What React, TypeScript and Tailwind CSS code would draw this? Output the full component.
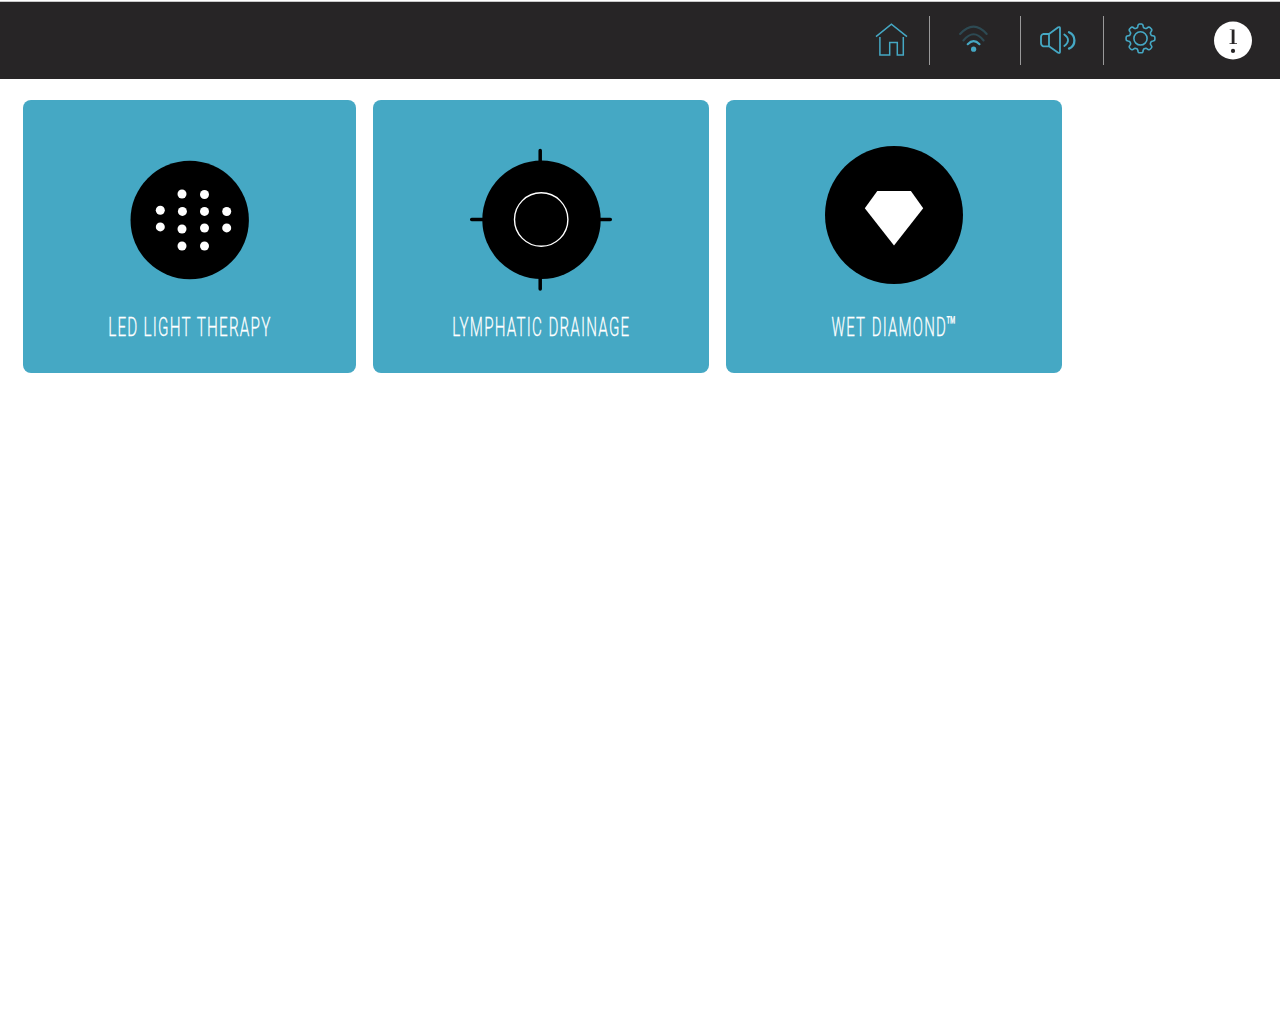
import type { ReactNode } from 'react';

const gearPath = (() => {
  const points: string[] = [];
  for (let i = 0; i < 240; i++) {
    const a = (i / 240) * Math.PI * 2;
    const wave = Math.tanh(2.2 * (Math.cos(8 * a) + 0.1)) / Math.tanh(2.42);
    const r = 12.7 + 1.7 * wave;
    points.push(`${(15.5 + r * Math.cos(a)).toFixed(2)} ${(16.4 + r * Math.sin(a)).toFixed(2)}`);
  }
  return `M${points.join('L')}Z`;
})();

function HomeIcon() {
  return (
    <svg width="34" height="36" viewBox="0 0 34 36" fill="none" stroke="#45a8c4" strokeWidth="1.5">
      <path d="M1 16.6 16.4 4.2 32 16.6" />
      <path d="M4.9 17V35.1H14.7V22.6H22.3V35.1H28.3V17" />
    </svg>
  );
}

function WifiIcon() {
  return (
    <svg width="32" height="30" viewBox="-0.6 0 32 30" fill="none" strokeLinecap="round" strokeWidth="2.1">
      <path d="M2.5 11Q16.1-3.8 29.1 11" stroke="#2d4a53" />
      <path d="M5.8 17.5Q16.1 5.1 26 17.5" stroke="#2d4a53" />
      <path d="M10.1 21.2Q16.1 15 21.9 21.2" stroke="#45a8c4" />
      <circle cx="16" cy="26.2" r="2.6" fill="#45a8c4" />
    </svg>
  );
}

function SoundIcon() {
  return (
    <svg width="38" height="30" viewBox="0 0 38 30" fill="none" stroke="#45a8c4" strokeWidth="1.8" strokeLinejoin="round" strokeLinecap="round">
      <path d="M10 9H4.2Q2 9.7 2 12V18Q2 20.5 4.2 21.3H10ZM10 9 19.2 2.3Q21 1.5 21 3.2V26.8Q21 28.5 19.2 27.7L10 21.3" />
      <path d="M25.3 9.5Q32.8 15 25.3 21" strokeWidth="1.8" />
      <path d="M30 7.2C37.2 10.5 37.2 20.3 30 23.6" strokeWidth="2.3" />
    </svg>
  );
}

function GearIcon() {
  return (
    <svg width="32" height="32" viewBox="0 0 32 32" fill="none" stroke="#45a8c4" strokeWidth="1.6">
      <path d={gearPath} />
      <circle cx="15.5" cy="16.4" r="6.6" />
    </svg>
  );
}

function AlertIcon() {
  return (
    <svg width="38" height="39" viewBox="0 -0.5 38 39">
      <circle cx="19" cy="19" r="19" fill="white" />
      <path d="M15.7 7.9H20.5V21.7H23V22.4H15.5V21.7H17.7V8.6H15.7Z" fill="#272526" />
      <circle cx="19" cy="29.4" r="2.1" fill="#272526" />
    </svg>
  );
}

function LedIcon() {
  const dots = [
    [52, 34], [74.5, 34.5], [30.3, 50.3], [52.4, 51.4], [74.5, 51.4], [96.7, 51.5],
    [30.3, 66.9], [52, 69], [74.5, 68], [96.7, 67.9], [52, 86], [74.5, 86],
  ];
  return (
    <svg width="120" height="120" viewBox="0 0 120 120">
      <circle cx="59.7" cy="60" r="59.2" />
      {dots.map(([x, y]) => <circle key={`${x}-${y}`} cx={x} cy={y} r="4.5" fill="white" />)}
    </svg>
  );
}

function TargetIcon() {
  return (
    <svg width="144" height="144" viewBox="0 0 144 144">
      <path d="M71.2 2.5V141M2.7 71.4H141.3" stroke="black" strokeWidth="3.5" strokeLinecap="round" />
      <circle cx="72.5" cy="71.7" r="59.2" />
      <circle cx="72.2" cy="71.5" r="26.7" fill="none" stroke="white" strokeWidth="1.4" />
    </svg>
  );
}

function DiamondIcon() {
  return (
    <svg width="138" height="138" viewBox="0 0 138 138">
      <circle cx="69" cy="69" r="69" />
      <path d="M52.3 45H85.9L98.2 62.3 69 99.5 39.8 62.3Z" fill="white" />
    </svg>
  );
}

function Card({ icon, label, className }: { icon: ReactNode; label: ReactNode; className: string }) {
  return (
    <button className={`flex shrink-0 flex-col items-center rounded-lg bg-[#45a8c4] text-white ${className}`}>
      <span className="flex h-[216px] items-start">{icon}</span>
      {label}
    </button>
  );
}

const labelClass = "flex h-6 origin-center items-start whitespace-nowrap font-['Roboto',sans-serif] text-[25px] leading-6 font-[350] tracking-[2px] [-webkit-text-stroke:0.3px_white]";

export default function App() {
  return (
    <div className="h-[1024px] w-[1280px] overflow-hidden bg-white">
      <header className="flex h-[79px] items-start border-t border-white bg-[#272526] pl-[874px]">
        <div className="-mr-[873px] -ml-[874px] h-px w-[1748px] shrink-0 bg-[#c8c8c8]" />
        <button className="mt-[19px] shrink-0"><HomeIcon /></button>
        <div className="mt-[15px] ml-[20px] h-[49px] w-px shrink-0 bg-[#999]" />
        <button className="mt-[22px] ml-[27px] shrink-0"><WifiIcon /></button>
        <div className="mt-[15px] ml-[31px] h-[49px] w-px shrink-0 bg-[#999]" />
        <button className="mt-6 ml-[18px] shrink-0"><SoundIcon /></button>
        <div className="mt-[15px] ml-[26px] h-[49px] w-px shrink-0 bg-[#999]" />
        <button className="mt-[21px] ml-[21px] shrink-0"><GearIcon /></button>
        <button className="mt-[20px] ml-[57px] shrink-0"><AlertIcon /></button>
      </header>
      <main className="flex items-end gap-[17px] pt-[20.5px] pl-[22.7px]">
        <Card
          className="h-[273.7px] w-[333.5px]"
          icon={<span className="pt-[60px] pl-[2px]"><LedIcon /></span>}
          label={<span className={`${labelClass} scale-x-[0.61] gap-[8px]`}><span>LED</span><span>LIGHT</span><span>THERAPY</span></span>}
        />
        <Card
          className="h-[273px] w-[336px]"
          icon={<span className="pt-[48px]"><TargetIcon /></span>}
          label={<span className={`${labelClass} scale-x-[0.605] gap-[9px]`}><span>LYMPHATIC</span><span>DRAINAGE</span></span>}
        />
        <Card
          className="h-[273px] w-[336px]"
          icon={<span className="pt-[46px]"><DiamondIcon /></span>}
          label={<span className={`${labelClass} scale-x-[0.6] gap-[9px]`}><span>WET</span><span>DIAMOND<span className="-ml-0.5 text-[28px] leading-[0px] font-normal tracking-normal">™</span></span></span>}
        />
      </main>
    </div>
  );
}
